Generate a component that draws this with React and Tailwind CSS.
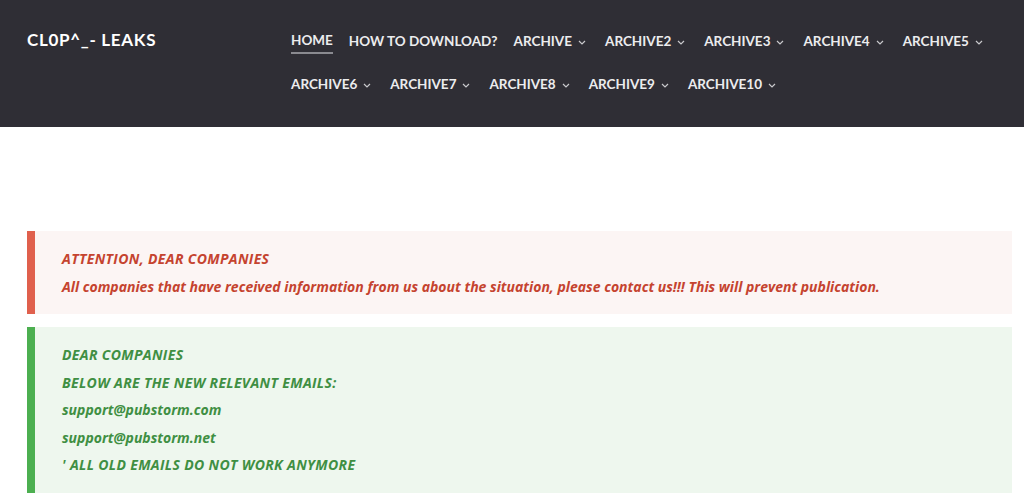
import React from 'react';

const navItems = [
  { label: 'HOME', active: true },
  { label: 'HOW TO DOWNLOAD?' },
  { label: 'ARCHIVE', menu: true },
  { label: 'ARCHIVE2', menu: true },
  { label: 'ARCHIVE3', menu: true },
  { label: 'ARCHIVE4', menu: true },
  { label: 'ARCHIVE5', menu: true },
  { label: 'ARCHIVE6', menu: true },
  { label: 'ARCHIVE7', menu: true },
  { label: 'ARCHIVE8', menu: true },
  { label: 'ARCHIVE9', menu: true },
  { label: 'ARCHIVE10', menu: true },
];

const Chevron = () => (
  <svg width="8" height="5" viewBox="0 0 8 5" className="ml-[6px] mt-[2px]" fill="none">
    <path d="M1 1l3 3 3-3" stroke="#c9c9cc" strokeWidth="1.2" />
  </svg>
);

const App = () => {
  return (
    <div className="w-full min-h-screen bg-white font-['Lato','Noto_Sans',sans-serif]">
      {/* Header */}
      <header className="bg-[#2f2e35] h-[127px] flex pl-[27px] pr-[10px]">
        <div className="w-[264px] pt-[27px]">
          <span className="text-[17px] font-bold text-white tracking-[0.7px]">CL0P^_- LEAKS</span>
        </div>
        <nav className="flex flex-wrap content-start pt-[30px] gap-y-[21px] flex-1">
          {navItems.map((item) => (
            <div
              key={item.label}
              className={`flex items-center h-[22px] ${item.menu ? 'mr-[19px]' : 'mr-[16px]'}`}
            >
              <span
                className={`text-[13.5px] font-bold text-[#ececee] leading-[22px] ${
                  item.active ? 'border-b-2 border-[#8a8a90] h-[25px]' : ''
                }`}
              >
                {item.label}
              </span>
              {item.menu && <Chevron />}
            </div>
          ))}
        </nav>
      </header>

      {/* Notices */}
      <main className="pt-[104px] pl-[27px] pr-[12px] flex flex-col gap-[13px] font-['Open_Sans',sans-serif] italic font-bold text-[14px]">
        <div className="bg-[#fcf5f4] border-l-[8px] border-[#e0604d] pl-[27px] py-[14px] text-[#c5432f] flex flex-col">
          <p className="leading-[27.5px] tracking-[0.35px]">ATTENTION, DEAR COMPANIES</p>
          <p className="leading-[27.5px]">
            All companies that have received information from us about the situation, please contact us!!! This will prevent publication.
          </p>
        </div>
        <div className="bg-[#eef7ee] border-l-[8px] border-[#4caf50] pl-[27px] py-[14px] text-[#3f8f43] flex flex-col">
          <p className="leading-[27.5px] tracking-[0.35px]">DEAR COMPANIES</p>
          <p className="leading-[27.5px] tracking-[0.35px]">BELOW ARE THE NEW RELEVANT EMAILS:</p>
          <p className="leading-[27.5px]">support@pubstorm.com</p>
          <p className="leading-[27.5px]">support@pubstorm.net</p>
          <p className="leading-[27.5px] tracking-[0.35px]">' ALL OLD EMAILS DO NOT WORK ANYMORE</p>
        </div>
      </main>
    </div>
  );
};

export default App;
